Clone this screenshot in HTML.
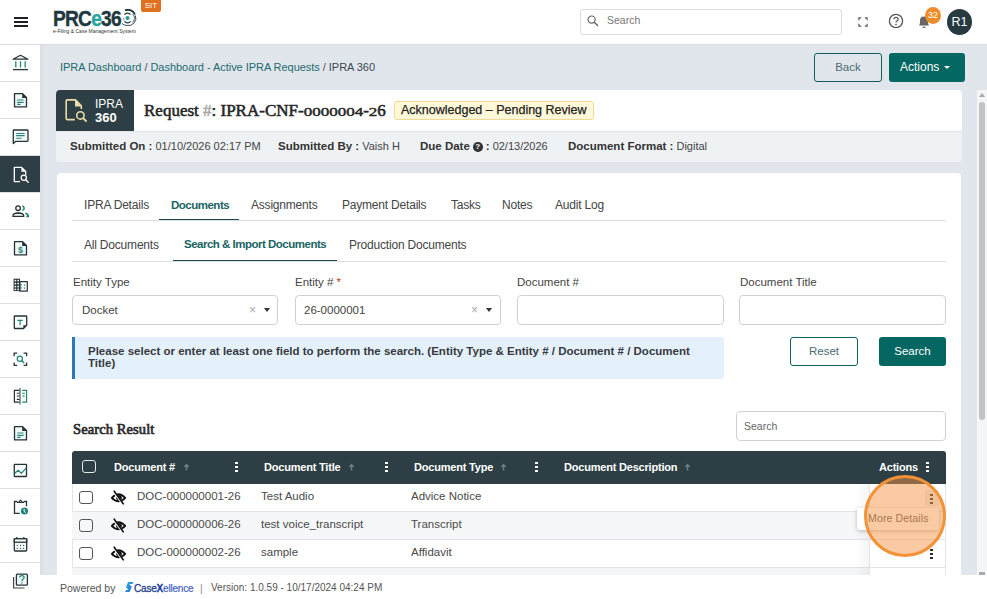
<!DOCTYPE html>
<html><head><meta charset="utf-8">
<style>
*{box-sizing:border-box;margin:0;padding:0}
html,body{width:987px;height:599px;overflow:hidden;background:#e1e6ed;font-family:"Liberation Sans",sans-serif;color:#333}
.abs{position:absolute}
#hdr{position:absolute;left:0;top:0;width:987px;height:45px;background:#fff;border-bottom:1px solid #d9dde2}
#side{position:absolute;left:0;top:45px;width:40px;height:554px;background:#fff}
.si{position:absolute;left:0;width:40px;height:37px;border-bottom:1px solid #dcdee1}
.si svg{position:absolute;left:11px;top:9px}
.si.act{background:#2d3f44}
#crumb{left:60px;top:61px;font-size:11px;color:#1d6b6f;white-space:nowrap;letter-spacing:-0.04px}
.btn{position:absolute;border-radius:3px;font-size:12.5px;text-align:center}
#card1{left:56px;top:90px;width:906px;height:72px;background:#fff;border-radius:4px;overflow:hidden}
#card2{left:57px;top:173px;width:904px;height:430px;background:#fff;border-radius:4px}
#foot{left:40px;top:575px;width:947px;height:24px;background:#fff;font-size:11px;color:#444}
#sb{left:977px;top:90px;width:10px;height:485px;background:#f4f5f6}
.t12{font-size:12px;line-height:14px;white-space:nowrap;letter-spacing:-0.2px}
.bsm{font-weight:bold;font-size:11.5px;letter-spacing:-0.5px}
.t115{font-size:11.5px;line-height:14px;white-space:nowrap}
.inp{position:absolute;height:30px;border:1px solid #cfd3d7;border-radius:4px;background:#fff}
.caret{position:absolute;width:0;height:0;border-left:3.5px solid transparent;border-right:3.5px solid transparent;border-top:4px solid #333}
.cbx{position:absolute;width:14px;height:13px;border:1.3px solid #555;border-radius:3px}
.th{top:460px;font-size:11px;line-height:14px;font-weight:bold;letter-spacing:-0.2px;color:#fff;white-space:nowrap}
.srt{top:460px;font-size:10px;line-height:14px;color:#7c8a8d}
.keb{position:absolute;width:3px;height:11px;background:radial-gradient(circle,#fff 1.3px,transparent 1.5px) 0 0/3px 4px repeat-y}
.keb.dk{background:radial-gradient(circle,#222 1.1px,transparent 1.4px) 0 0/3px 4px repeat-y}
.lb{font-size:11.5px;color:#333}
.os{display:inline-block;transform:scaleY(0.74);transform-origin:50% 80%}
.td{font-size:11.5px;line-height:14px;color:#4a4a4a;white-space:nowrap}
</style></head><body>

<div id="hdr">
  <!-- hamburger -->
  <div class="abs" style="left:14px;top:17px;width:14px;height:2px;background:#1b2126"></div>
  <div class="abs" style="left:14px;top:21px;width:14px;height:2px;background:#1b2126"></div>
  <div class="abs" style="left:14px;top:25px;width:14px;height:2px;background:#1b2126"></div>
  <!-- logo -->
  <div class="abs" style="left:53px;top:7px;font-size:21.8px;line-height:24px;font-weight:bold;color:#1e3840;letter-spacing:-0.9px;white-space:nowrap;transform:scaleX(0.88);transform-origin:0 0;-webkit-text-stroke:0.4px #1e3840">PRC<span style="color:#2ba59c;-webkit-text-stroke:0.4px #2ba59c">e</span>36</div>
  <svg class="abs" style="left:119px;top:9px" width="18" height="18" viewBox="0 0 18 18">
    <path d="M6 1.4 A7.5 7.5 0 0 1 16 5.5" fill="none" stroke="#1e3840" stroke-width="1.8"/>
    <path d="M16.4 6.5 A7.5 7.5 0 0 1 8 16.5 A7.5 7.5 0 0 1 3 14.5" fill="none" stroke="#1e3840" stroke-width="0.9"/>
    <path d="M13.6 5 A5.4 5.4 0 0 1 13.2 13.5" fill="none" stroke="#1e3840" stroke-width="0.8"/>
    <path d="M5.5 5.6 A3.8 3.8 0 0 1 11.5 5.6 M11.5 12.4 A3.8 3.8 0 0 1 5.5 12.4" fill="none" stroke="#1e3840" stroke-width="1.4"/>
    <path d="M4.6 9 A3.9 3.9 0 0 0 5.2 11.5" fill="none" stroke="#1e3840" stroke-width="0.6"/>
    <circle cx="8.5" cy="9" r="2.1" fill="#2b9a8f"/>
  </svg>
  <div class="abs" style="left:53px;top:28px;font-size:5px;line-height:6px;color:#333;white-space:nowrap">e-Filing &amp; Case Management System</div>
  <div class="abs" style="left:141px;top:0px;width:20px;height:12px;background:#e0701e;border-radius:0 0 2px 2px;color:#fff;font-size:8px;text-align:center;line-height:11px">SIT</div>
  <!-- search -->
  <div class="abs" style="left:580px;top:9px;width:262px;height:26px;border:1px solid #d9dce0;border-radius:3px;background:#fff"></div>
  <svg class="abs" style="left:587px;top:15px" width="12" height="12" viewBox="0 0 12 12"><circle cx="4.6" cy="4.6" r="3.6" fill="none" stroke="#666" stroke-width="1.2"/><path d="M7.3 7.3 L10.6 10.6" stroke="#666" stroke-width="1.4" stroke-linecap="round"/></svg>
  <div class="abs" style="left:607px;top:14px;font-size:10.5px;line-height:12px;color:#777">Search</div>
  <!-- fullscreen -->
  <svg class="abs" style="left:857.5px;top:16.5px" width="10" height="10" viewBox="0 0 11 11"><path d="M1 3.5 V1 H3.5 M7.5 1 H10 V3.5 M10 7.5 V10 H7.5 M3.5 10 H1 V7.5" fill="none" stroke="#555" stroke-width="1.3"/></svg>
  <!-- help -->
  <svg class="abs" style="left:888px;top:13px" width="16" height="16" viewBox="0 0 16 16"><circle cx="8" cy="8" r="6.6" fill="none" stroke="#555" stroke-width="1.3"/><path d="M5.9 6.3 Q5.9 4.3 8 4.3 Q10.1 4.3 10.1 6.2 Q10.1 7.4 8.8 8 Q8 8.4 8 9.5" fill="none" stroke="#555" stroke-width="1.3"/><circle cx="8" cy="11.5" r="0.8" fill="#555"/></svg>
  <!-- bell -->
  <svg class="abs" style="left:917px;top:14px" width="14" height="15" viewBox="0 0 14 15"><path d="M2 11.5 Q3 10.5 3 8 V6.5 Q3 2.5 7 2.5 Q11 2.5 11 6.5 V8 Q11 10.5 12 11.5 Z" fill="#666"/><path d="M5.5 13.3 H8.5" stroke="#666" stroke-width="1.2"/></svg>
  <div class="abs" style="left:925px;top:7px;width:16px;height:17px;border-radius:50%;background:#ee8c2a;color:#fff;font-size:9px;text-align:center;line-height:16px">32</div>
  <!-- avatar -->
  <div class="abs" style="left:947px;top:9px;width:25px;height:26px;border-radius:50%;background:#263a3f;color:#fff;font-size:12.5px;text-align:center;line-height:26px">R1</div>
</div>

<div id="side">
  <div class="si" style="top:0px"><svg width="30" height="30" viewBox="0 0 30 30" style="left:5px;top:3px"><path d="M8 11.2 L15.5 7.3 L23 11.2 Z" fill="#f5fbfa" stroke="#263238" stroke-width="1.2" stroke-linejoin="round"/><path d="M10.8 13.3 V19.5 M15.5 13.3 V19.5 M20.2 13.3 V19.5" stroke="#238579" stroke-width="1.3"/><path d="M8 21.6 H23" stroke="#263238" stroke-width="1.3"/></svg></div>
  <div class="si" style="top:37px"><svg width="30" height="30" viewBox="0 0 30 30" style="left:5px;top:3px"><path d="M9.5 8.6 H17.6 L21.5 12.5 V21.9 H9.5 Z" fill="#f1faf9" stroke="#263238" stroke-width="1.3" stroke-linejoin="round"/><path d="M17.2 8.2 L21.9 12.9 H17.2 Z" fill="#263238"/><path d="M12.2 15 H18.6 M12.2 17.3 H18.6 M12.2 19.3 H15.6" stroke="#238579" stroke-width="1.2"/></svg></div>
  <div class="si" style="top:74px"><svg width="30" height="30" viewBox="0 0 30 30" style="left:5px;top:3px"><path d="M9 8 H22.2 Q23 8 23 8.8 V18.5 Q23 19.3 22.2 19.3 H10.8 L8.3 21.6 V8.8 Q8.3 8 9 8 Z" fill="#f1faf9" stroke="#263238" stroke-width="1.3" stroke-linejoin="round"/><path d="M11.2 11.5 H19.6 M11.2 13.6 H19.6 M11.2 16.2 H16.6" stroke="#238579" stroke-width="1.1"/></svg></div>
  <div class="si act" style="top:111px"><svg width="30" height="30" viewBox="0 0 30 30" style="left:5px;top:3px"><path d="M15 22.6 H9.3 V8.4 H16.6 L20.7 12.5 V15.8" fill="none" stroke="#fff" stroke-width="1.3" stroke-linejoin="round"/><path d="M16.4 8.2 L21 12.8 H16.4 Z" fill="#fff"/><circle cx="18.8" cy="18.8" r="2.6" fill="none" stroke="#fff" stroke-width="1.3"/><path d="M20.7 20.7 L23.2 23.2" stroke="#fff" stroke-width="1.4" stroke-linecap="round"/></svg></div>
  <div class="si" style="top:148px"><svg width="30" height="30" viewBox="0 0 30 30" style="left:5px;top:3px"><circle cx="13.1" cy="12.2" r="2.3" fill="none" stroke="#263238" stroke-width="1.3"/><path d="M7.9 20.4 Q7.6 17.1 13.3 17 Q19 17.1 18.8 20.4 Z" fill="#f5fbfa" stroke="#263238" stroke-width="1.3" stroke-linejoin="round"/><path d="M17.3 10 A2.3 2.3 0 0 1 17.3 14.5" fill="none" stroke="#238579" stroke-width="1.6"/><path d="M20.4 17.3 Q23.3 18 23.3 20.5 H21.3" fill="none" stroke="#238579" stroke-width="1.6"/></svg></div>
  <div class="si" style="top:185px"><svg width="30" height="30" viewBox="0 0 30 30" style="left:5px;top:3px"><path d="M9.5 8.6 H17.6 L21.5 12.5 V21.9 H9.5 Z" fill="#f1faf9" stroke="#263238" stroke-width="1.3" stroke-linejoin="round"/><path d="M17.2 8.2 L21.9 12.9 H17.2 Z" fill="#263238"/><text x="15.5" y="20.3" font-size="9" font-family="Liberation Sans" font-weight="bold" fill="#238579" text-anchor="middle">$</text></svg></div>
  <div class="si" style="top:222px"><svg width="30" height="30" viewBox="0 0 30 30" style="left:5px;top:3px"><rect x="8.6" y="8.7" width="6.4" height="12.4" fill="#263238"/><rect x="15" y="11.6" width="7.3" height="9.5" fill="#f1faf9" stroke="#263238" stroke-width="1.2"/><g fill="#fff"><rect x="9.6" y="9.8" width="1.6" height="1.6"/><rect x="12.4" y="9.8" width="1.6" height="1.6"/><rect x="9.6" y="12.8" width="1.6" height="1.6"/><rect x="12.4" y="12.8" width="1.6" height="1.6"/><rect x="9.6" y="15.8" width="1.6" height="1.6"/><rect x="12.4" y="15.8" width="1.6" height="1.6"/><rect x="9.6" y="18.6" width="1.6" height="1.6"/><rect x="12.4" y="18.6" width="1.6" height="1.6"/></g><path d="M15 14.8 H17 M15 17.9 H17" stroke="#238579" stroke-width="1"/><circle cx="19.5" cy="15" r="0.6" fill="#263238"/><circle cx="19.5" cy="18" r="0.6" fill="#263238"/></svg></div>
  <div class="si" style="top:259px"><svg width="30" height="30" viewBox="0 0 30 30" style="left:5px;top:3px"><path d="M9.9 9 H21.1 Q21.7 9 21.7 9.6 V18.4 L18.5 21.5 H9.9 Q9.3 21.5 9.3 20.9 V9.6 Q9.3 9 9.9 9 Z" fill="#fbfdfd" stroke="#263238" stroke-width="1.3" stroke-linejoin="round"/><path d="M18.3 21.6 V18.3 H21.8 Z" fill="#263238"/><path d="M12.4 13.3 H17.8 M15.1 13.3 V18.3" stroke="#238579" stroke-width="1.2"/></svg></div>
  <div class="si" style="top:296px"><svg width="30" height="30" viewBox="0 0 30 30" style="left:5px;top:3px"><path d="M9.2 12.2 V9.2 H12.2 M18.6 9.2 H21.6 V12.2 M21.6 18.4 V21.4 H18.6 M12.2 21.4 H9.2 V18.4" fill="none" stroke="#263238" stroke-width="1.3"/><circle cx="14.8" cy="14.8" r="2.6" fill="#f1faf9" stroke="#238579" stroke-width="1.2"/><path d="M16.8 16.8 L18.8 18.8" stroke="#238579" stroke-width="1.3" stroke-linecap="round"/></svg></div>
  <div class="si" style="top:333px"><svg width="30" height="30" viewBox="0 0 30 30" style="left:5px;top:3px"><path d="M14.6 9.4 H9.4 V21.2 H14.6" fill="#fbfdfd" stroke="#263238" stroke-width="1.2"/><path d="M11.8 12.2 H14.6 M11.8 15 H14.6 M11.8 18.4 H14.6" stroke="#263238" stroke-width="1.1"/><path d="M15 7 V23.5" stroke="#555" stroke-width="1.2"/><path d="M17.2 9.4 H21.6 V21.2 H17.2" fill="#f2fbfa" stroke="#238579" stroke-width="1.2"/><path d="M17.2 12.2 H19.8 M17.2 15 H19.8" stroke="#238579" stroke-width="1.1"/></svg></div>
  <div class="si" style="top:370px"><svg width="30" height="30" viewBox="0 0 30 30" style="left:5px;top:3px"><path d="M9.5 8.6 H17.6 L21.5 12.5 V21.9 H9.5 Z" fill="#f1faf9" stroke="#263238" stroke-width="1.3" stroke-linejoin="round"/><path d="M17.2 8.2 L21.9 12.9 H17.2 Z" fill="#263238"/><path d="M12.2 15 H18.6 M12.2 17.3 H18.6 M12.2 19.3 H15.6" stroke="#238579" stroke-width="1.2"/></svg></div>
  <div class="si" style="top:407px"><svg width="30" height="30" viewBox="0 0 30 30" style="left:5px;top:3px"><rect x="9.3" y="9.3" width="12.2" height="12.2" rx="0.5" fill="#fbfdfd" stroke="#263238" stroke-width="1.3"/><path d="M9.8 18.3 L13.2 15.3 L16.3 18.3 L21.2 13" fill="none" stroke="#238579" stroke-width="1.2" stroke-linejoin="round"/></svg></div>
  <div class="si" style="top:444px"><svg width="30" height="30" viewBox="0 0 30 30" style="left:5px;top:3px"><path d="M14.7 21.4 H9.5 V9.5 H12 M19 9.5 H21.5 V14.3" fill="none" stroke="#263238" stroke-width="1.3"/><path d="M12 11.1 H19 V9.6 H17 Q16.5 7.6 15.5 7.6 Q14.5 7.6 14 9.6 H12 Z" fill="#263238"/><circle cx="15.5" cy="9.4" r="0.5" fill="#fff"/><circle cx="19.5" cy="19" r="3.6" fill="#238579"/><path d="M19.1 16.9 V19.3 L20.6 20.7" fill="none" stroke="#fff" stroke-width="1"/></svg></div>
  <div class="si" style="top:481px"><svg width="30" height="30" viewBox="0 0 30 30" style="left:5px;top:3px"><rect x="9.3" y="9.8" width="12.4" height="12.2" rx="1" fill="#f2fbfa" stroke="#263238" stroke-width="1.3"/><rect x="9.3" y="9.8" width="12.4" height="3.4" fill="#fff" stroke="#263238" stroke-width="1.3"/><path d="M11.8 8 V10 M18.8 8 V10" stroke="#263238" stroke-width="1.3"/><g fill="#333"><circle cx="12.3" cy="16.3" r="0.65"/><circle cx="15.5" cy="16.3" r="0.65"/><circle cx="18.6" cy="16.3" r="0.65"/><circle cx="12.3" cy="19.3" r="0.65"/><circle cx="15.5" cy="19.3" r="0.65"/><circle cx="18.6" cy="19.3" r="0.65"/></g></svg></div>
  <div class="si" style="top:518px"><svg width="30" height="30" viewBox="0 0 30 30" style="left:5px;top:3px"><rect x="11.4" y="8.2" width="11" height="11" rx="1" fill="#f2fbfa" stroke="#263238" stroke-width="1.3"/><path d="M8.6 11 V22 H19.6" fill="none" stroke="#444" stroke-width="1.2"/><path d="M14.6 11.6 Q14.6 9.6 16.9 9.6 Q19.1 9.6 19.1 11.5 Q19.1 12.6 17.9 13.3 Q16.9 13.8 16.9 15.2" fill="none" stroke="#238579" stroke-width="1.3"/><circle cx="16.9" cy="16.9" r="0.75" fill="#238579"/></svg></div>
</div>

<div class="abs" style="left:40px;top:45px;width:5px;height:530px;background:linear-gradient(to right,rgba(0,0,0,0.035),rgba(0,0,0,0))"></div>
<div id="crumb" class="abs">IPRA Dashboard <span style="color:#4d555c">/</span> Dashboard - Active IPRA Requests <span style="color:#4d555c">/</span> <span style="color:#3b4750">IPRA 360</span></div>
<div class="btn" style="left:814px;top:53px;width:68px;height:29px;border:1px solid #0f5f5c;color:#4d6b70;line-height:27px;font-size:11.5px">Back</div>
<div class="btn" style="left:889px;top:53px;width:76px;height:29px;background:#046762;color:#fff;line-height:29px;font-size:12px"><span class="abs" style="left:11px;top:0">Actions</span><span class="abs" style="left:55px;top:13px;width:0;height:0;border-left:3.5px solid transparent;border-right:3.5px solid transparent;border-top:3.5px solid #fff"></span></div>

<div id="card1" class="abs">
  <div class="abs" style="left:0;top:0;width:78px;height:41px;background:#2d3f44"></div>
  <div class="abs" style="left:39px;top:8px;color:#fff;font-size:12px;line-height:13px;white-space:nowrap">IPRA<br><b style="font-size:13px">360</b></div>
  <svg class="abs" style="left:8.5px;top:9px" width="24" height="25" viewBox="0 0 24 25"><path d="M9.8 20.6 H2.2 Q1.2 20.6 1.2 19.6 V1.9 Q1.2 0.9 2.2 0.9 H10.5 L16.3 6.7 V10" fill="none" stroke="#ebdcaa" stroke-width="1.6" stroke-linejoin="round"/><path d="M10 0.8 L16.6 7.4 H10 Z" fill="#ebdcaa"/><circle cx="15.4" cy="16.4" r="3.7" fill="none" stroke="#ebdcaa" stroke-width="1.6"/><path d="M18.1 19.1 L21 22" stroke="#ebdcaa" stroke-width="1.8" stroke-linecap="round"/></svg>
  <div class="abs" style="left:88px;top:12px;font-family:'Liberation Serif',serif;font-size:17px;line-height:18px;letter-spacing:0px;font-weight:normal;-webkit-text-stroke:0.55px #262626;color:#262626;white-space:nowrap">Request <span style="color:#aaa;-webkit-text-stroke:0.55px #aaa">#</span>: IPRA-CNF-<span class="os">0000004</span>-<span class="os">2</span>6</div>
  <div class="abs" style="left:338px;top:11px;width:200px;height:19px;background:#fef7d8;border:1px solid #f1da96;border-radius:3px;font-size:12.5px;line-height:17px;padding-left:6px;color:#222;white-space:nowrap;-webkit-text-stroke:0.25px #222">Acknowledged – Pending Review</div>
  <div class="abs" style="left:0;top:41px;width:906px;height:31px;background:#eff2f4;border-top:1px solid #dfe3e6"></div>
  <div class="abs" style="left:14px;top:50px;font-size:11px;line-height:13px;color:#444;white-space:nowrap"><b class="lb">Submitted On :</b> 01/10/2026 02:17 PM</div>
  <div class="abs" style="left:222px;top:50px;font-size:11px;line-height:13px;color:#444;white-space:nowrap"><b class="lb">Submitted By :</b> Vaish H</div>
  <div class="abs" style="left:364px;top:50px;font-size:11px;line-height:13px;color:#444;white-space:nowrap"><b class="lb">Due Date <span style="display:inline-block;width:9.5px;height:9.5px;border-radius:50%;background:#333;color:#fff;font-size:8px;line-height:10px;text-align:center;vertical-align:1px">?</span> :</b> 02/13/2026</div>
  <div class="abs" style="left:512px;top:50px;font-size:11px;line-height:13px;color:#444;white-space:nowrap"><b class="lb">Document Format :</b> Digital</div>
</div>

<div id="card2" class="abs"></div>
<!-- tabs -->
<div class="abs t12" style="left:84px;top:198px;color:#444">IPRA Details</div>
<div class="abs t12 bsm" style="left:171px;top:198px;color:#1a6462">Documents</div>
<div class="abs t12" style="left:251px;top:198px;color:#444">Assignments</div>
<div class="abs t12" style="left:342px;top:198px;color:#444">Payment Details</div>
<div class="abs t12" style="left:451px;top:198px;color:#444">Tasks</div>
<div class="abs t12" style="left:502px;top:198px;color:#444">Notes</div>
<div class="abs t12" style="left:555px;top:198px;color:#444">Audit Log</div>
<div class="abs" style="left:72px;top:220px;width:874px;height:1px;background:#dcdfe3"></div>
<div class="abs" style="left:159px;top:218.8px;width:80px;height:1.6px;background:#1f4b4c"></div>
<div class="abs t12" style="left:84px;top:238px;color:#444">All Documents</div>
<div class="abs t12 bsm" style="left:184px;top:237px;color:#1a6462">Search &amp; Import Documents</div>
<div class="abs t12" style="left:349px;top:238px;color:#444">Production Documents</div>
<div class="abs" style="left:72px;top:261px;width:874px;height:1px;background:#dcdfe3"></div>
<div class="abs" style="left:173px;top:259.8px;width:164px;height:1.6px;background:#1f4b4c"></div>
<!-- form -->
<div class="abs t115" style="left:73px;top:275px;color:#444">Entity Type</div>
<div class="abs t115" style="left:295px;top:275px;color:#444">Entity # <span style="color:#c0392b">*</span></div>
<div class="abs t115" style="left:517px;top:275px;color:#444">Document #</div>
<div class="abs t115" style="left:740px;top:275px;color:#444">Document Title</div>
<div class="inp" style="left:72px;top:295px;width:206px"></div>
<div class="inp" style="left:295px;top:295px;width:206px"></div>
<div class="inp" style="left:517px;top:295px;width:207px"></div>
<div class="inp" style="left:739px;top:295px;width:207px"></div>
<div class="abs t115" style="left:82px;top:303px;color:#444">Docket</div>
<div class="abs t115" style="left:304px;top:303px;color:#444">26-0000001</div>
<div class="abs" style="left:249px;top:303px;font-size:12px;color:#aaa">&#215;</div>
<div class="abs" style="left:471px;top:303px;font-size:12px;color:#aaa">&#215;</div>
<div class="caret" style="left:264px;top:308px"></div>
<div class="caret" style="left:486px;top:308px"></div>
<div class="abs" style="left:72px;top:337px;width:652px;height:42px;background:#e4f0fb;border-left:3px solid #2d78bb;border-radius:0 3px 3px 0"></div>
<div class="abs" style="left:88px;top:346px;width:630px;font-size:11.5px;line-height:11.5px;font-weight:bold;color:#363a3e">Please select or enter at least one field to perform the search. (Entity Type &amp; Entity # / Document # / Document Title)</div>
<div class="btn" style="left:790px;top:337px;width:68px;height:29px;border:1px solid #0f5f5c;color:#4d6b70;line-height:27px;font-size:11.5px">Reset</div>
<div class="btn" style="left:879px;top:337px;width:67px;height:29px;background:#046762;color:#fff;line-height:29px;font-size:11.5px">Search</div>
<!-- search result -->
<div class="abs" style="left:73px;top:421px;font-family:'Liberation Serif',serif;font-weight:normal;-webkit-text-stroke:0.7px #2b2b2b;font-size:14.5px;line-height:16px;color:#2b2b2b;letter-spacing:0.1px">Search Result</div>
<div class="inp" style="left:736px;top:411px;width:210px;height:30px"></div>
<div class="abs" style="left:744px;top:420px;font-size:10.5px;color:#666">Search</div>
<!-- table -->
<div class="abs" style="left:72px;top:451px;width:874px;height:33px;background:#2d3f44;border-radius:3px 3px 0 0"></div>
<div class="cbx" style="left:82px;top:460px;border-color:#e4e8e8"></div>
<div class="abs th" style="left:114px">Document #</div>
<div class="abs th" style="left:264px">Document Title</div>
<div class="abs th" style="left:414px">Document Type</div>
<div class="abs th" style="left:564px">Document Description</div>
<div class="abs th" style="left:879px">Actions</div>
<svg class="abs" style="left:183px;top:463px" width="7" height="8" viewBox="0 0 7 8"><path d="M0.6 4 L3.5 0.6 L6.4 4 Z" fill="#6e8185"/><rect x="2.75" y="3.4" width="1.5" height="4" fill="#6e8185"/></svg>
<svg class="abs" style="left:348px;top:463px" width="7" height="8" viewBox="0 0 7 8"><path d="M0.6 4 L3.5 0.6 L6.4 4 Z" fill="#6e8185"/><rect x="2.75" y="3.4" width="1.5" height="4" fill="#6e8185"/></svg>
<svg class="abs" style="left:500px;top:463px" width="7" height="8" viewBox="0 0 7 8"><path d="M0.6 4 L3.5 0.6 L6.4 4 Z" fill="#6e8185"/><rect x="2.75" y="3.4" width="1.5" height="4" fill="#6e8185"/></svg>
<svg class="abs" style="left:684px;top:463px" width="7" height="8" viewBox="0 0 7 8"><path d="M0.6 4 L3.5 0.6 L6.4 4 Z" fill="#6e8185"/><rect x="2.75" y="3.4" width="1.5" height="4" fill="#6e8185"/></svg>
<div class="keb" style="left:235px;top:461px"></div>
<div class="keb" style="left:385px;top:461px"></div>
<div class="keb" style="left:535px;top:461px"></div>
<div class="keb" style="left:926px;top:461px"></div>
<!-- rows -->
<div class="abs" style="left:72px;top:484px;width:874px;height:91px;background:#fff;border-left:1px solid #e3e3e3;border-right:1px solid #e3e3e3"></div>
<div class="abs" style="left:72px;top:512px;width:874px;height:27px;background:#f6f7f8"></div>
<div class="abs" style="left:72px;top:568px;width:874px;height:7px;background:#f4f5f6"></div>
<div class="abs" style="left:72px;top:511px;width:874px;height:1px;background:#e1e3e5"></div>
<div class="abs" style="left:72px;top:539px;width:874px;height:1px;background:#e1e3e5"></div>
<div class="abs" style="left:72px;top:567px;width:874px;height:1px;background:#e1e3e5"></div>
<div class="cbx" style="left:79px;top:491px"></div>
<div class="cbx" style="left:79px;top:519px"></div>
<div class="cbx" style="left:79px;top:547px"></div>
<svg class="abs" style="left:110px;top:490px" width="17" height="15" viewBox="0 0 17 15"><path d="M1.8 7.8 Q8.5 0.8 15.2 7.8 Q8.5 14.8 1.8 7.8 Z" fill="none" stroke="#111" stroke-width="1.9" stroke-linejoin="round"/><circle cx="9" cy="7.8" r="2.9" fill="#111"/><path d="M3.6 1.6 L12.6 13.6" stroke="#fff" stroke-width="2.4"/><path d="M4.2 1.2 L13.2 13.8" stroke="#111" stroke-width="1.6" stroke-linecap="round"/></svg>
<svg class="abs" style="left:110px;top:518px" width="17" height="15" viewBox="0 0 17 15"><path d="M1.8 7.8 Q8.5 0.8 15.2 7.8 Q8.5 14.8 1.8 7.8 Z" fill="none" stroke="#111" stroke-width="1.9" stroke-linejoin="round"/><circle cx="9" cy="7.8" r="2.9" fill="#111"/><path d="M3.6 1.6 L12.6 13.6" stroke="#fff" stroke-width="2.4"/><path d="M4.2 1.2 L13.2 13.8" stroke="#111" stroke-width="1.6" stroke-linecap="round"/></svg>
<svg class="abs" style="left:110px;top:546px" width="17" height="15" viewBox="0 0 17 15"><path d="M1.8 7.8 Q8.5 0.8 15.2 7.8 Q8.5 14.8 1.8 7.8 Z" fill="none" stroke="#111" stroke-width="1.9" stroke-linejoin="round"/><circle cx="9" cy="7.8" r="2.9" fill="#111"/><path d="M3.6 1.6 L12.6 13.6" stroke="#fff" stroke-width="2.4"/><path d="M4.2 1.2 L13.2 13.8" stroke="#111" stroke-width="1.6" stroke-linecap="round"/></svg>
<div class="abs td" style="left:137px;top:489px">DOC-000000001-26</div>
<div class="abs td" style="left:261px;top:489px">Test Audio</div>
<div class="abs td" style="left:411px;top:489px">Advice Notice</div>
<div class="abs td" style="left:137px;top:517px">DOC-000000006-26</div>
<div class="abs td" style="left:261px;top:517px">test voice_transcript</div>
<div class="abs td" style="left:411px;top:517px">Transcript</div>
<div class="abs td" style="left:137px;top:545px">DOC-000000002-26</div>
<div class="abs td" style="left:261px;top:545px">sample</div>
<div class="abs td" style="left:411px;top:545px">Affidavit</div>
<!-- sticky actions col -->
<div class="abs" style="left:855px;top:484px;width:14px;height:91px;background:linear-gradient(to right,rgba(0,0,0,0),rgba(0,0,0,0.04))"></div>
<div class="abs" style="left:869px;top:484px;width:77px;height:91px;background:#fff;border-left:1px solid #e3e3e3;border-right:1px solid #e3e3e3"></div>
<div class="abs" style="left:869px;top:511px;width:77px;height:1px;background:#e1e3e5"></div>
<div class="abs" style="left:869px;top:539px;width:77px;height:1px;background:#e1e3e5"></div>
<div class="abs" style="left:869px;top:567px;width:77px;height:1px;background:#e1e3e5"></div>
<div class="abs" style="left:925px;top:490px;width:14px;height:16px;background:#ececec;border-radius:2px"></div>
<div class="keb dk" style="left:930px;top:493px"></div>
<div class="keb dk" style="left:930px;top:548px"></div>
<!-- tooltip -->
<div class="abs" style="left:857px;top:508px;width:82px;height:22px;background:#fff;border-radius:2px;box-shadow:0 1px 4px rgba(0,0,0,0.25)"></div>
<div class="abs" style="left:868px;top:512px;font-size:10.6px;line-height:12px;color:#555;white-space:nowrap;letter-spacing:0.1px">More Details</div>
<!-- highlight circle -->
<div class="abs" style="left:864px;top:475px;width:82px;height:82px;border-radius:50%;border:3.7px solid #f39237;background:rgba(246,150,70,0.5)"></div>


<div id="sb" class="abs"></div>
<div id="foot" class="abs"></div>
<div class="abs" style="left:60px;top:582px;font-size:10.5px;line-height:12px;color:#555;white-space:nowrap">Powered by</div>
<svg class="abs" style="left:124.5px;top:582px" width="9" height="10" viewBox="0 0 9 10"><defs><linearGradient id="sg" x1="0" y1="0" x2="1" y2="1"><stop offset="0" stop-color="#2fb0e6"/><stop offset="1" stop-color="#1b6fd0"/></linearGradient></defs><path d="M3 0 H8.5 L7.3 2 H4.2 L6.8 4.8 L4.6 10 H0 L1.2 8 H3.6 L1 5.2 Z" fill="url(#sg)"/></svg>
<div class="abs" style="left:134px;top:582.5px;font-size:10px;line-height:12px;color:#233d8c;white-space:nowrap;letter-spacing:-0.2px;-webkit-text-stroke:0.3px #233d8c">Case<b style="color:#1740b5">X</b><span style="color:#4660c4;-webkit-text-stroke:0.2px #4660c4">ellence</span></div>
<div class="abs" style="left:200px;top:582px;font-size:10.5px;line-height:12px;color:#888">|</div>
<div class="abs" style="left:211px;top:582px;font-size:10px;line-height:12px;color:#555;white-space:nowrap">Version: 1.0.59 - 10/17/2024 04:24 PM</div>
<!-- scrollbar -->
<div class="abs" style="left:979px;top:102px;width:6px;height:318px;background:#c3c3c3;border-radius:3px"></div>
<div class="abs" style="left:978.5px;top:92.5px;width:0;height:0;border-left:3.5px solid transparent;border-right:3.5px solid transparent;border-bottom:4.5px solid #a9a9a9"></div>
<div class="abs" style="left:979px;top:572px;width:6px;height:3px;background:#a9a9a9"></div>


</body></html>
